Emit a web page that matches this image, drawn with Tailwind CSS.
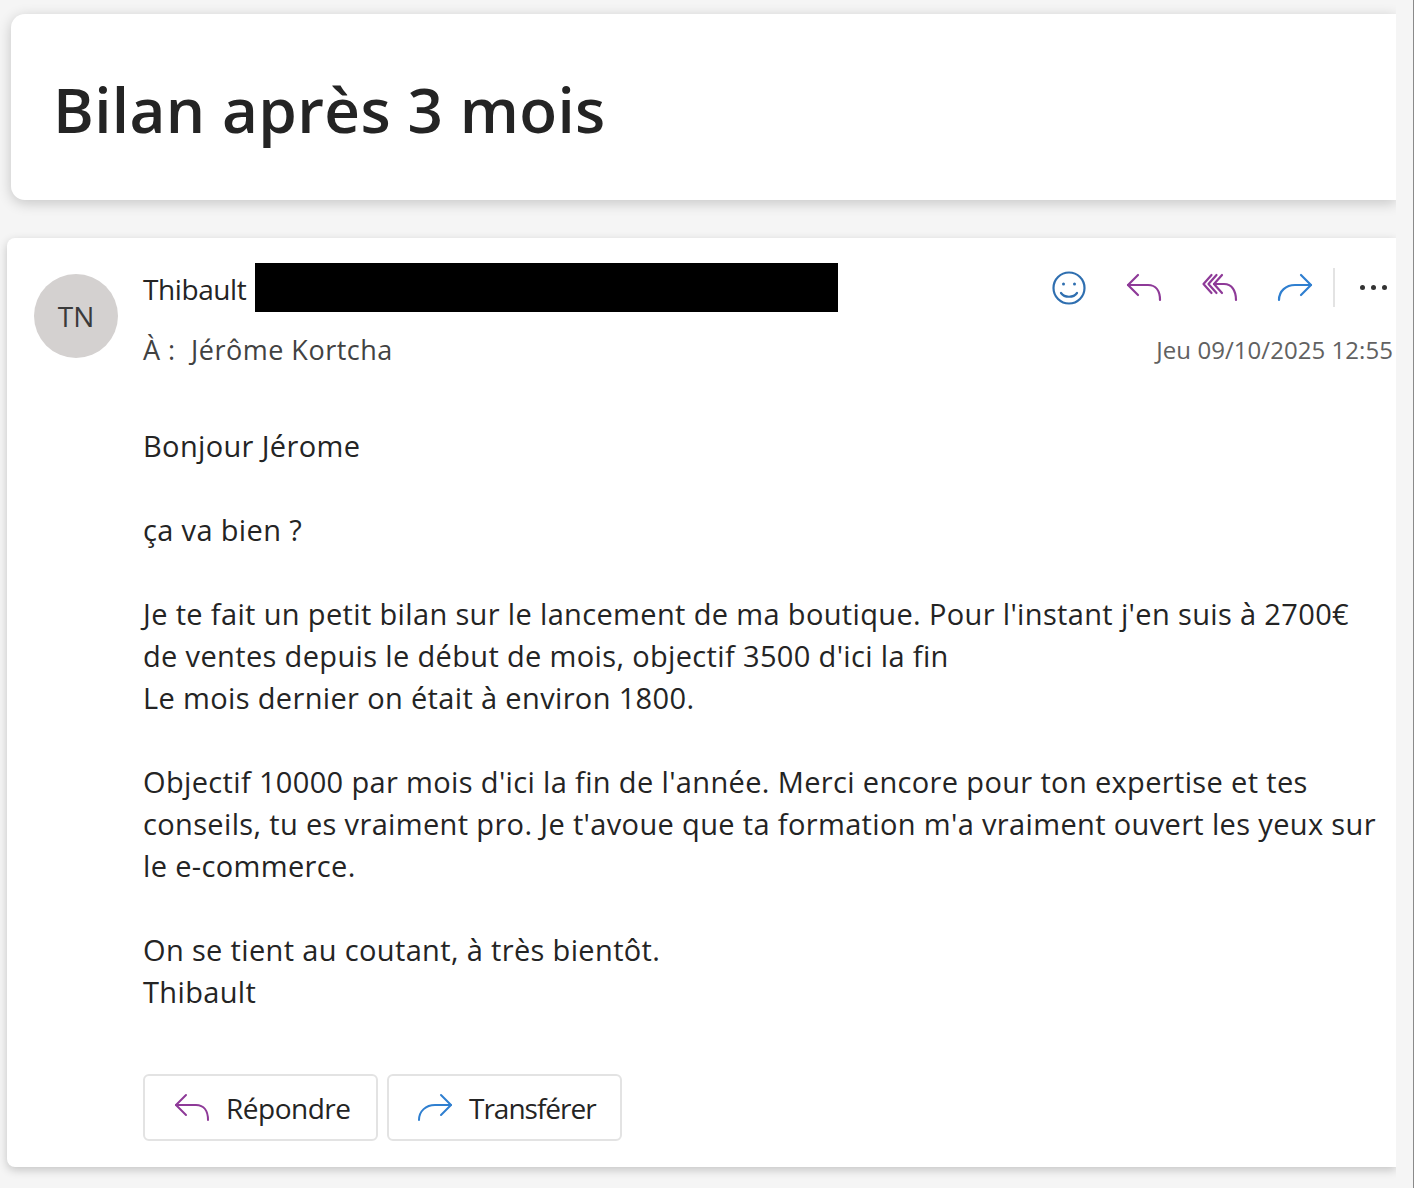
<!DOCTYPE html>
<html lang="fr">
<head>
    <meta charset="UTF-8">
    <script src="https://cdn.jsdelivr.net/npm/@tailwindcss/browser@4"></script>
    <title>Bilan après 3 mois</title>
</head>
<body class="bg-[#f5f5f5] font-['Open_Sans','Noto_Sans',sans-serif] overflow-hidden">
    <div class="h-[1188px] w-[1414px] overflow-hidden border-r border-[#8a8a8a]">
        <div class="w-[1396px] h-[1188px] overflow-hidden">
            <!-- Subject -->
            <div class="ml-[11px] mt-[14px] h-[186px] bg-white rounded-l-[14px] shadow-[0_3px_14px_rgba(0,0,0,0.2)] flex items-center pl-[42px]">
                <h1 class="text-[62px] font-semibold text-[#242424] tracking-[0.35px] leading-none pt-[4px]">Bilan après 3 mois</h1>
            </div>

            <!-- Message -->
            <div class="ml-[7px] mt-[38px] h-[929px] bg-white rounded-l-[8px] shadow-[0_3px_10px_rgba(0,0,0,0.2)] flex">
                <div class="w-[137px] shrink-0 pl-[27px] pt-[36px]">
                    <div class="w-[84px] h-[84px] rounded-full bg-[#d4d1d0] flex items-center justify-center text-[28px] text-[#3a3a3a]">TN</div>
                </div>
                <div class="flex-1 min-w-0 pt-[25px]">
                    <!-- Sender and actions -->
                    <div class="flex justify-between h-[49px] pr-[9px]">
                        <div class="flex items-center">
                            <span class="text-[28px] text-[#242424] tracking-[-0.4px] pt-[3px] -ml-[1px] w-[112px]">Thibault</span>
                            <div class="w-[583px] h-[49px] bg-black"></div>
                        </div>
                        <div class="flex items-center h-[49px]">
                            <svg class="w-[36px] h-[36px] text-[#2f6fb0]" viewBox="0 0 36 36" fill="none" stroke="currentColor" stroke-width="2.2" stroke-linecap="round"><circle cx="18" cy="18" r="15.5"/><path d="M10 23c3.5 5 12.5 5 16 0"/><circle cx="12.5" cy="14" r="1.5" fill="currentColor" stroke="none"/><circle cx="23.5" cy="14" r="1.5" fill="currentColor" stroke="none"/></svg>
                            <svg class="ml-[39px] w-[36px] h-[30px] text-[#8e3a98]" viewBox="0 0 36 30" fill="none" stroke="currentColor" stroke-width="2.2" stroke-linecap="round" stroke-linejoin="round"><path d="M12 2 2 12l10 10"/><path d="M2 12h20c8 0 12 6 12 15"/></svg>
                            <svg class="ml-[40px] w-[36px] h-[30px] text-[#8e3a98]" viewBox="0 0 36 30" fill="none" stroke="currentColor" stroke-width="2.2" stroke-linecap="round" stroke-linejoin="round"><path d="M9.5 2 1.5 11l8 9"/><path d="M14.5 2l-8 9 8 9"/><path d="M20 2l-8 9 8 9"/><path d="M12 11h10c8 0 12 7 12 16"/></svg>
                            <svg class="ml-[39px] w-[36px] h-[30px] text-[#2f7fd0]" viewBox="0 0 36 30" fill="none" stroke="currentColor" stroke-width="2.2" stroke-linecap="round" stroke-linejoin="round"><path d="M24 2l10 10-10 10"/><path d="M34 12H18C9 12 2 18 2 27"/></svg>
                            <div class="ml-[20px] w-[2px] h-[39px] bg-[#e3e3e3]"></div>
                            <div class="ml-[25px] flex gap-[6px]">
                                <span class="w-[5px] h-[5px] rounded-full bg-[#333333]"></span>
                                <span class="w-[5px] h-[5px] rounded-full bg-[#333333]"></span>
                                <span class="w-[5px] h-[5px] rounded-full bg-[#333333]"></span>
                            </div>
                        </div>
                    </div>

                    <!-- Recipient and date -->
                    <div class="mt-[19px] h-[38px] flex justify-between items-center pr-[3px]">
                        <div class="text-[27px] text-[#424242] tracking-[0.5px] flex -ml-[1px]">
                            <span class="w-[48px]">À :</span>
                            <span>Jérôme Kortcha</span>
                        </div>
                        <div class="text-[24px] text-[#616161] tracking-[0.05px]">Jeu 09/10/2025 12:55</div>
                    </div>

                    <!-- Body -->
                    <div class="mt-[56px] -ml-[1px] text-[29px] leading-[42px] text-[#242424] tracking-[0.35px] whitespace-nowrap">
                        <p>Bonjour Jérome</p>
                        <p class="mt-[42px]">ça va bien ?</p>
                        <p class="mt-[42px]">Je te fait un petit bilan sur le lancement de ma boutique. Pour l'instant j'en suis à 2700€<br>de ventes depuis le début de mois, objectif 3500 d'ici la fin<br>Le mois dernier on était à environ 1800.</p>
                        <p class="mt-[42px]">Objectif 10000 par mois d'ici la fin de l'année. Merci encore pour ton expertise et tes<br>conseils, tu es vraiment pro. Je t'avoue que ta formation m'a vraiment ouvert les yeux sur<br>le e-commerce.</p>
                        <p class="mt-[42px]">On se tient au coutant, à très bientôt.<br>Thibault</p>
                    </div>

                    <!-- Buttons -->
                    <div class="mt-[61px] -ml-[1px] flex gap-[9px]">
                        <button class="w-[235px] h-[67px] border-2 border-[#e3e3e3] rounded-[6px] bg-white flex items-center pl-[29px] text-[28px] text-[#242424] tracking-[-0.5px]">
                            <svg class="w-[36px] h-[30px] text-[#8e3a98]" viewBox="0 0 36 30" fill="none" stroke="currentColor" stroke-width="2" stroke-linecap="round" stroke-linejoin="round"><path d="M12 2 2 12l10 10"/><path d="M2 12h20c8 0 12 6 12 15"/></svg>
                            <span class="ml-[16px]">Répondre</span>
                        </button>
                        <button class="w-[235px] h-[67px] border-2 border-[#e3e3e3] rounded-[6px] bg-white flex items-center pl-[28px] text-[28px] text-[#242424] tracking-[-1px]">
                            <svg class="w-[36px] h-[30px] text-[#2f7fd0]" viewBox="0 0 36 30" fill="none" stroke="currentColor" stroke-width="2" stroke-linecap="round" stroke-linejoin="round"><path d="M24 2l10 10-10 10"/><path d="M34 12H18C9 12 2 18 2 27"/></svg>
                            <span class="ml-[16px]">Transférer</span>
                        </button>
                    </div>
                </div>
            </div>
        </div>
    </div>
</body>
</html>
